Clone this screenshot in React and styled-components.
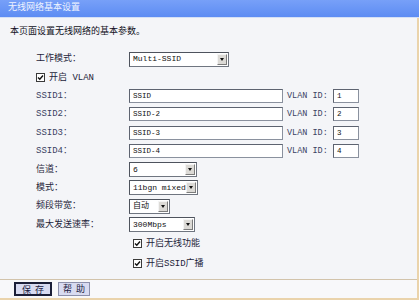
import styled, { createGlobalStyle } from "styled-components";

const Global = createGlobalStyle`
  html, body { margin: 0; padding: 0; background: #fff; }
  body { font-family: "Liberation Mono", "Noto Sans CJK SC", monospace; }
`;

const Frame = styled.div`
  width: 419px;
  height: 300px;
  display: flex;
  flex-direction: column;
  background: #f4f5f8;
`;

const TitleBar = styled.div`
  flex: none;
  height: 17px;
  padding-left: 8px;
  background: linear-gradient(#77a0f8, #5d8cf3);
  border-bottom: 1px solid #d4e0f6;
  color: #eef3ff;
  font-size: 9px;
  line-height: 17px;
`;

const Panel = styled.div`
  flex: 1;
  display: flex;
  flex-direction: column;
  border-right: 2px solid #ead3ab;
  border-bottom: 2px solid #ead3ab;
`;

const Content = styled.div`
  flex: 1;
  padding: 8px 0 0 10px;
  color: #1e1e3a;
`;

const Intro = styled.div`
  font-size: 9px;
  line-height: 12px;
  color: #111122;
  margin-bottom: 12px;
`;

const Row = styled.div`
  display: flex;
  align-items: center;
  height: ${p => p.$h || 18.4}px;
  padding-left: ${p => p.$indent ?? 26}px;
`;

const Label = styled.div`
  flex: none;
  width: 93px;
  white-space: nowrap;
  font-size: 9px;
  line-height: 12px;
  color: ${p => (p.$mono ? "#3a4262" : "#1e1e3a")};
`;

const TextBox = styled.div`
  flex: none;
  box-sizing: border-box;
  width: ${p => p.$w}px;
  height: 14px;
  padding-left: 3px;
  background: #fff;
  border: 1px solid #8a919e;
  border-top-color: #5d6370;
  border-left-color: #5d6370;
  font-size: 7.5px;
  line-height: 12px;
  color: #111;
`;

const SideLabel = styled.div`
  flex: none;
  width: 46px;
  margin-left: 4px;
  white-space: nowrap;
  font-size: 8.5px;
  line-height: 12px;
  color: #3a4262;
`;

const Select = styled.div`
  flex: none;
  box-sizing: border-box;
  display: flex;
  align-items: center;
  width: ${p => p.$w}px;
  height: 15px;
  padding: 0 1px 0 3px;
  background: #fff;
  border: 1px solid #6f7580;
  border-top-color: #4e535d;
  border-left-color: #4e535d;
  white-space: nowrap;
  font-size: 8px;
  line-height: 12px;
  color: #111;
`;

const DropBtn = styled.span`
  box-sizing: border-box;
  display: flex;
  align-items: center;
  justify-content: center;
  flex: none;
  width: 10px;
  height: 11px;
  margin-left: auto;
  background: #dcdad6;
  border: 1px solid #7c7c7c;
  border-top-color: #f4f4f4;
  border-left-color: #f4f4f4;

  &::after {
    content: "";
    border-left: 2.5px solid transparent;
    border-right: 2.5px solid transparent;
    border-top: 3px solid #111;
  }
`;

const Check = styled.label`
  display: flex;
  align-items: center;
  gap: 4px;
  white-space: nowrap;
  font-size: 9px;
  line-height: 12px;
  color: #1e1e3a;
`;

const Box = styled.span`
  box-sizing: border-box;
  width: 9px;
  height: 9px;
  background: #fff;
  border: 1px solid #3a3a3a;
  display: flex;
  align-items: center;
  justify-content: center;
`;

const Footer = styled.div`
  flex: none;
  height: 18px;
  display: flex;
  align-items: center;
  gap: 6px;
  padding-left: 14px;
  background: #f8f8fa;
  border-top: 1px solid #d2c3ab;
`;

const Btn = styled.button`
  box-sizing: border-box;
  width: ${p => p.$w}px;
  height: 14px;
  padding: 0;
  font-family: "Noto Sans CJK SC", sans-serif;
  font-size: 9px;
  line-height: 12px;
  letter-spacing: 4px;
  text-indent: 4px;
  color: #1a1a40;
  background: #d8dbf1;
  border: ${p => (p.$primary ? "2px solid #1b1f38" : "1px solid #8c90ab")};
`;

const Tick = () => (
  <Box>
    <svg width="7" height="7" viewBox="0 0 7 7">
      <polyline points="1,3.5 2.8,5.3 6,1.5" fill="none" stroke="#111" strokeWidth="1.4" />
    </svg>
  </Box>
);

const ssids = [
  { name: "SSID1", value: "SSID", vlan: "1" },
  { name: "SSID2", value: "SSID-2", vlan: "2" },
  { name: "SSID3", value: "SSID-3", vlan: "3" },
  { name: "SSID4", value: "SSID-4", vlan: "4" },
];

const selects = [
  { label: "信道：", value: "6", w: 68 },
  { label: "模式：", value: "11bgn mixed", w: 69 },
  { label: "频段带宽：", value: "自动", w: 41 },
  { label: "最大发送速率：", value: "300Mbps", w: 66 },
];

export default function App() {
  return (
    <>
      <Global />
      <Frame>
        <TitleBar>无线网络基本设置</TitleBar>
        <Panel>
          <Content>
            <Intro>本页面设置无线网络的基本参数。</Intro>

            <Row>
              <Label>工作模式：</Label>
              <Select $w={100}>Multi-SSID<DropBtn /></Select>
            </Row>

            <Row>
              <Check><Tick />开启 VLAN</Check>
            </Row>

            {ssids.map(s => (
              <Row key={s.name}>
                <Label $mono>{s.name}：</Label>
                <TextBox $w={154}>{s.value}</TextBox>
                <SideLabel>VLAN ID:</SideLabel>
                <TextBox $w={26}>{s.vlan}</TextBox>
              </Row>
            ))}

            {selects.map(s => (
              <Row key={s.label}>
                <Label>{s.label}</Label>
                <Select $w={s.w}>{s.value}<DropBtn /></Select>
              </Row>
            ))}

            <Row $h={20} $indent={123}>
              <Check><Tick />开启无线功能</Check>
            </Row>
            <Row $h={20} $indent={123}>
              <Check><Tick />开启SSID广播</Check>
            </Row>
          </Content>
          <Footer>
            <Btn $primary $w={38}>保存</Btn>
            <Btn $w={32}>帮助</Btn>
          </Footer>
        </Panel>
      </Frame>
    </>
  );
}
